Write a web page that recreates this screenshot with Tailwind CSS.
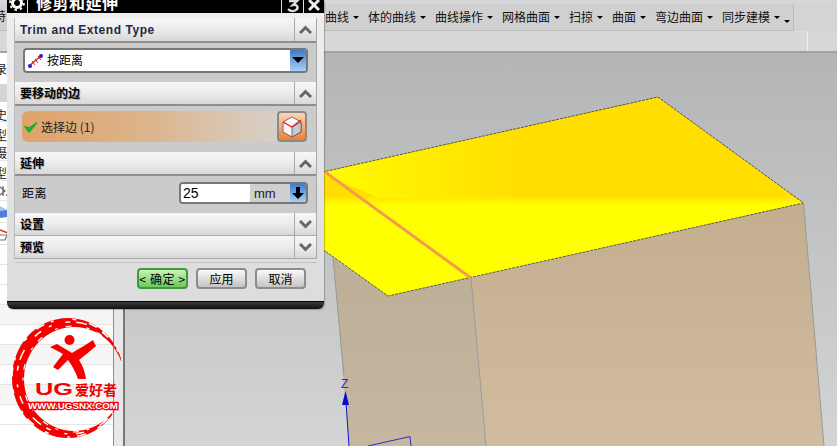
<!DOCTYPE html>
<html lang="zh">
<head>
<meta charset="utf-8">
<script src="https://cdn.jsdelivr.net/npm/@tailwindcss/browser@4"></script>
</head>
<body class="m-0">
<div class="relative w-[837px] h-[446px] overflow-hidden bg-[#d8d8d8] flex flex-col font-['Liberation_Sans','Noto_Sans_CJK_SC',sans-serif] text-[12px] text-black">

  <!-- top toolbars -->
  <div class="h-[4px] bg-[#d6d6d6] shrink-0"></div>
  <div class="h-[27px] shrink-0 flex bg-[#d4d4d4]">
    <div class="w-[794px] relative flex items-center bg-[#d0d0d0] border-b border-r border-[#bcbcbc] pl-[325px] gap-[9px] whitespace-nowrap font-['Noto_Sans_CJK_SC',sans-serif] text-[#111]">
      <span class="absolute left-[-6px] top-[3px]">特</span>
      <span class="flex items-center gap-[4px]">曲线<i class="w-0 h-0 border-x-[3px] border-t-[3px] border-x-transparent border-t-black"></i></span>
      <span class="flex items-center gap-[4px]">体的曲线<i class="w-0 h-0 border-x-[3px] border-t-[3px] border-x-transparent border-t-black"></i></span>
      <span class="flex items-center gap-[4px]">曲线操作<i class="w-0 h-0 border-x-[3px] border-t-[3px] border-x-transparent border-t-black"></i></span>
      <span class="flex items-center gap-[4px]">网格曲面<i class="w-0 h-0 border-x-[3px] border-t-[3px] border-x-transparent border-t-black"></i></span>
      <span class="flex items-center gap-[4px]">扫掠<i class="w-0 h-0 border-x-[3px] border-t-[3px] border-x-transparent border-t-black"></i></span>
      <span class="flex items-center gap-[4px]">曲面<i class="w-0 h-0 border-x-[3px] border-t-[3px] border-x-transparent border-t-black"></i></span>
      <span class="flex items-center gap-[4px]">弯边曲面<i class="w-0 h-0 border-x-[3px] border-t-[3px] border-x-transparent border-t-black"></i></span>
      <span class="flex items-center gap-[4px]">同步建模<i class="w-0 h-0 border-x-[3px] border-t-[3px] border-x-transparent border-t-black"></i></span>
      <i class="w-0 h-0 mt-[9px] -ml-[5px] border-x-[3px] border-t-[3px] border-x-transparent border-t-black"></i>
    </div>
  </div>
  <div class="h-[22px] shrink-0 flex bg-[#d8d8d8] border-b-2 border-[#a2a2a2]">
    <div class="w-[808px] border-r border-[#f0f0f0]"></div>
  </div>

  <!-- main area -->
  <div class="flex-1 flex min-h-0">
    <!-- left panel -->
    <div class="w-[113px] shrink-0 flex flex-col bg-white font-['Noto_Sans_CJK_SC',sans-serif] text-[#222] overflow-hidden">
      <div class="h-[31px] shrink-0 flex items-center"><span class="-ml-[5px]">录</span></div>
      <div class="h-[18px] shrink-0 bg-[#d4d4d4]"></div>
      <div class="h-[20px] shrink-0 flex items-center pt-[6px] border-b border-[#e4e4e4]"><span class="-ml-[5px]">史</span></div>
      <div class="h-[20px] shrink-0 flex items-center pt-[6px] border-b border-[#e4e4e4]"><span class="-ml-[5px]">型</span></div>
      <div class="h-[19px] shrink-0 flex items-center pt-[4px] border-b border-[#e4e4e4]"><span class="-ml-[5px]">摄</span></div>
      <div class="h-[20px] shrink-0 flex items-center pt-[4px] border-b border-[#e4e4e4]"><span class="-ml-[5px]">型</span></div>
      <div class="h-[20px] shrink-0 flex items-center border-b border-[#e4e4e4]">
        <svg class="w-[8px] h-[14px]" viewBox="0 0 8 14"><path d="M0,3 L5,7 L0,11 M3,2 V12" fill="none" stroke="#666" stroke-width="1.300"/><circle cx="7" cy="11" r="1" fill="#d03030"/></svg>
      </div>
      <div class="h-[22px] shrink-0 flex items-center border-b border-[#e4e4e4]">
        <svg class="w-[8px] h-[14px]" viewBox="0 0 8 14"><path d="M0,3 L7,5 V12 L0,13 Z" fill="#4f80e0"/><path d="M0,1 L7,5 L0,6 Z" fill="#a8c4f4"/></svg>
      </div>
      <div class="h-[22px] shrink-0 flex items-center border-b border-[#e4e4e4]">
        <svg class="w-[8px] h-[14px]" viewBox="0 0 8 14"><path d="M0,3 L8,6" stroke="#e03020" stroke-width="1.500"/><path d="M0,8 H7 L5,13 H0" fill="none" stroke="#777" stroke-width="1.200"/></svg>
      </div>
      <div class="h-[20px] shrink-0 border-b border-[#e4e4e4]"></div>
      <div class="h-[20px] shrink-0 border-b border-[#e4e4e4]"></div>
      <div class="h-[20px] shrink-0 border-b border-[#e4e4e4]"></div>
      <div class="h-[20px] shrink-0 bg-[#f5f5f5] border-b border-[#e4e4e4]"></div>
      <div class="h-[20px] shrink-0 bg-white border-b border-[#e4e4e4]"></div>
      <div class="h-[20px] shrink-0 bg-[#f5f5f5] border-b border-[#e4e4e4]"></div>
      <div class="h-[20px] shrink-0 bg-white border-b border-[#e4e4e4]"></div>
      <div class="h-[20px] shrink-0 bg-[#f5f5f5] border-b border-[#e4e4e4]"></div>
      <div class="h-[20px] shrink-0 bg-white border-b border-[#e4e4e4]"></div>
    </div>
    <!-- splitter -->
    <div class="w-[12px] shrink-0 bg-[#e8e8e8] border-l border-r-2 border-l-[#8c8c8c] border-r-[#787878]"></div>
    <!-- viewport -->
    <div class="flex-1 relative bg-gradient-to-b from-[#b4b5b7] to-[#d3d4d6]">
      <svg class="absolute inset-0 w-full h-full" viewBox="125 53 712 393" xmlns="http://www.w3.org/2000/svg">
        <defs>
          <linearGradient id="yv" gradientUnits="userSpaceOnUse" x1="0" y1="195" x2="0" y2="205">
            <stop offset="0" stop-color="#ffde00"/><stop offset="1" stop-color="#ffff00"/>
          </linearGradient>
          <linearGradient id="yh" gradientUnits="userSpaceOnUse" x1="340" y1="0" x2="520" y2="0">
            <stop offset="0" stop-color="#ffff00"/><stop offset="1" stop-color="#ffff00" stop-opacity="0"/>
          </linearGradient>
          <linearGradient id="lf" gradientUnits="userSpaceOnUse" x1="0" y1="280" x2="0" y2="446">
            <stop offset="0" stop-color="#bdaf98"/><stop offset="1" stop-color="#c6b79f"/>
          </linearGradient>
          <linearGradient id="rf" gradientUnits="userSpaceOnUse" x1="0" y1="205" x2="0" y2="446">
            <stop offset="0" stop-color="#c4ae90"/><stop offset="1" stop-color="#d2bc9f"/>
          </linearGradient>
        </defs>
        <polygon points="333,258 388,296 471,278 486,446 349,446" fill="url(#lf)"/>
        <polygon points="471,278 803.500,203 824,446 486,446" fill="url(#rf)"/>
        <polygon points="318,173 658,97 803.500,203 388,296 318,246" fill="url(#yv)"/>
        <polygon points="318,173 658,97 690,121 700,198 380,198" fill="url(#yh)" opacity="0.85"/>
        <path d="M318,173 L658,97 L803.500,203 L388,296 L318,246" fill="none" stroke="#555" stroke-width="1" stroke-dasharray="3 1"/>
        <path d="M333,258 L344,376 M471,278 L486,446 M803.500,203 L824,446" fill="none" stroke="#9a9a9a" stroke-width="1"/>
        <line x1="325" y1="172" x2="471" y2="278" stroke="#f59c4c" stroke-width="3"/>
        <!-- csys -->
        <line x1="346" y1="402" x2="349" y2="446" stroke="#1414d8" stroke-width="1"/>
        <polygon points="345.500,391 342,405 349,405" fill="#0a0ad0"/>
        <text x="341" y="388" font-size="12" fill="#2a2ae0" font-family="Liberation Sans, sans-serif">Z</text>
        <path d="M368,446 L410,436.500 L411,446" fill="none" stroke="#2a2ad8" stroke-width="1"/>
      </svg>
    </div>
  </div>

  <!-- logo -->
  <svg class="absolute left-[8px] top-[314px] w-[124px] h-[128px]" viewBox="8 314 124 128" xmlns="http://www.w3.org/2000/svg">
    <defs>
      <mask id="rag" maskUnits="userSpaceOnUse" x="8" y="314" width="124" height="128">
        <rect x="8" y="314" width="124" height="128" fill="#fff"/>
        <rect x="114" y="361" width="18" height="24" fill="#000"/>
        <ellipse cx="71" cy="378" rx="54" ry="56" fill="none" stroke="#000" stroke-width="1.500" stroke-dasharray="8 9 3 14 5 6 11 17"/>
        <ellipse cx="68" cy="378" rx="56" ry="59" fill="none" stroke="#000" stroke-width="1.500" stroke-dasharray="4 13 9 7 3 19"/>
        <ellipse cx="73" cy="379" rx="50" ry="53" fill="none" stroke="#000" stroke-width="1.200" stroke-dasharray="3 8 6 15"/>
      </mask>
    </defs>
    <path mask="url(#rag)" fill="#f40000" fill-rule="evenodd" d="M12,378 A56,60 0 1 1 124,378 A56,60 0 1 1 12,378 Z M24,379 A50,52 0 1 0 124,379 A50,52 0 1 0 24,379 Z"/>
    <g fill="#f40000">
      <circle cx="69.500" cy="340" r="5"/>
      <path d="M50,347 L57,344 L72,353 C78,349 86,345 93,340 L96,346 C90,351 84,356 79,360 C83,366 85,372 86,379 L78,379 C75,371 72,365 68,360 L58,370 L53,367 L63,354 Z"/>
    </g>
    <text x="35" y="395" font-size="16" font-weight="700" fill="#f40000" textLength="38" lengthAdjust="spacingAndGlyphs" font-family="Liberation Sans, sans-serif">UG</text>
    <text x="75" y="395" font-size="14" font-weight="700" fill="#f40000" font-family="Noto Sans CJK SC, sans-serif">爱好者</text>
    <text x="28" y="408.500" font-size="8.500" font-weight="700" fill="#fff" stroke="#f40000" stroke-width="2.500" class="[paint-order:stroke]" textLength="90" lengthAdjust="spacingAndGlyphs" font-family="Liberation Sans, sans-serif">WWW.UGSNX.COM</text>
  </svg>

  <!-- dialog -->
  <div class="absolute left-[7px] top-0 w-[317px] h-[309px] flex flex-col rounded-b-[6px] overflow-hidden shadow-[1px_1px_1px_rgba(0,0,0,0.25)]">
    <!-- title bar -->
    <div class="h-[13px] shrink-0 bg-black flex items-start overflow-hidden text-white">
      <div class="w-[21px] h-[13px] border-r border-[#ddd] flex justify-center">
        <svg class="w-[16px] h-[16px] -mt-[5px] shrink-0" viewBox="0 0 16 16"><circle cx="8" cy="8" r="4.500" fill="none" stroke="#fff" stroke-width="3"/><circle cx="8" cy="8" r="7" fill="none" stroke="#fff" stroke-width="1.800" stroke-dasharray="2.500 3"/></svg>
      </div>
      <div class="flex-1 pl-[8px] -mt-[7px] text-[16px] font-bold leading-[18px] tracking-[0.5px] font-['Noto_Sans_CJK_SC',sans-serif]">修剪和延伸</div>
      <div class="w-[22px] h-[13px] border-l border-[#ddd] flex justify-center">
        <svg class="w-[14px] h-[13px]" viewBox="0 0 14 13"><path d="M3,1 H11 L7,5 C12,4 13,9 9,10.500 C7,11.500 4,11 2,9" fill="none" stroke="#ddd" stroke-width="2.400"/></svg>
      </div>
      <div class="w-[21px] h-[13px] border-l border-[#ddd] flex justify-center">
        <svg class="w-[12px] h-[13px]" viewBox="0 0 12 13"><path d="M1,0 L11,10 M11,0 L1,10" fill="none" stroke="#eee" stroke-width="3"/></svg>
      </div>
    </div>
    <!-- body -->
    <div class="flex-1 min-h-0 bg-gradient-to-b from-[#eeeeee] to-[#dcdcdc] px-[7px] pt-[5px] flex flex-col">
      <div class="flex flex-col border-l border-r border-b border-[#a8a8a8] border-l-[#bbb]">
        <!-- section 1 -->
        <div class="h-[23px] flex bg-gradient-to-b from-[#f6f6f6] via-[#ececec] to-[#d8d8d8]">
          <div class="flex-1 pl-[5px] flex items-center font-bold text-[12px] tracking-[0.55px] text-[#1e2a44]">Trim and Extend Type</div>
          <div class="w-[22px] border-l border-[#aaa] flex items-center justify-center">
            <svg class="w-[13px] h-[9px]" viewBox="0 0 13 9"><path d="M1,8 L6.500,2.500 L12,8" fill="none" stroke="#666" stroke-width="3"/></svg>
          </div>
        </div>
        <div class="h-[41px] bg-[#cbcbcb] border-t-2 border-[#8e8e8e] flex items-center px-[8px] pb-[5px]">
          <div class="w-full h-[25px] bg-white border-2 border-[#777] rounded-[4px] flex items-center overflow-hidden">
            <svg class="w-[17px] h-[17px] ml-[2px] shrink-0" viewBox="0 0 17 17"><path d="M2,14 L15,3" stroke="#e01818" stroke-width="1.300"/><path d="M5,9 L8,13 M8,7 L11,11 M11,4 L14,8" stroke="#e01818" stroke-width="1"/><circle cx="3" cy="14" r="2" fill="#2020d0"/><circle cx="14" cy="4" r="2" fill="#2020d0"/></svg>
            <span class="ml-[3px] flex-1 font-['Noto_Sans_CJK_SC',sans-serif] text-[12px] leading-none">按距离</span>
            <div class="w-[16px] h-full bg-gradient-to-b from-[#3f79c8] to-[#a8d0f4] flex items-center justify-center">
              <i class="w-0 h-0 border-x-[6px] border-t-[6px] border-x-transparent border-t-black"></i>
            </div>
          </div>
        </div>
        <!-- section 2 -->
        <div class="h-[22px] flex bg-gradient-to-b from-[#f6f6f6] via-[#ececec] to-[#d8d8d8]">
          <div class="flex-1 pl-[5px] flex items-center font-bold text-[12px] font-['Noto_Sans_CJK_SC',sans-serif] [text-shadow:1px_1px_0_#b0b0b0]">要移动的边</div>
          <div class="w-[22px] border-l border-[#aaa] flex items-center justify-center">
            <svg class="w-[13px] h-[9px]" viewBox="0 0 13 9"><path d="M1,8 L6.500,2.500 L12,8" fill="none" stroke="#666" stroke-width="3"/></svg>
          </div>
        </div>
        <div class="h-[48px] bg-[#cbcbcb] border-t-2 border-[#8e8e8e] flex items-center pl-[7px] pr-[9px] pb-[5px]">
          <div class="flex-1 h-[31px] rounded-l-[6px] bg-gradient-to-r from-[#dfa367] via-[#dcb48c] to-[#d6d0c8] flex items-center pl-[2px]">
            <svg class="w-[14px] h-[14px]" viewBox="0 0 14 14"><path d="M1.500,7 L5,12 L13,2.500 L5.500,8 Z" fill="#10c030" stroke="#10b030" stroke-width="1.500"/></svg>
            <span class="ml-[3px] font-['Noto_Sans_CJK_SC',sans-serif] text-[12px] text-[#222]">选择边 (1)</span>
          </div>
          <div class="w-[30px] h-[31px] rounded-[4px] border-2 border-[#8a8a8a] bg-gradient-to-b from-[#f9d4b4] to-[#f27c24] flex items-center justify-center">
            <svg class="w-[22px] h-[24px]" viewBox="0 0 22 24"><path d="M11,2 L20,7 V17 L11,22 L2,17 V7 Z" fill="#f6f6fa" stroke="#555" stroke-width="0.800"/><path d="M11,12 L20,7 V17 L11,22 Z" fill="#c8c8d4" stroke="#555" stroke-width="0.800"/><path d="M2,7 L11,12 L20,5" fill="none" stroke="#e02010" stroke-width="1.300"/></svg>
          </div>
        </div>
        <!-- section 3 -->
        <div class="h-[22px] flex bg-gradient-to-b from-[#f6f6f6] via-[#ececec] to-[#d8d8d8]">
          <div class="flex-1 pl-[5px] flex items-center font-bold text-[12px] font-['Noto_Sans_CJK_SC',sans-serif] [text-shadow:1px_1px_0_#b0b0b0]">延伸</div>
          <div class="w-[22px] border-l border-[#aaa] flex items-center justify-center">
            <svg class="w-[13px] h-[9px]" viewBox="0 0 13 9"><path d="M1,8 L6.500,2.500 L12,8" fill="none" stroke="#666" stroke-width="3"/></svg>
          </div>
        </div>
        <div class="h-[39px] bg-[#cbcbcb] border-t-2 border-[#8e8e8e] flex items-center justify-between pl-[7px] pr-[8px] pb-[3px] font-['Noto_Sans_CJK_SC',sans-serif]">
          <span class="text-[12px] tracking-[0.5px]">距离</span>
          <div class="w-[129px] h-[22px] border-2 border-[#777] rounded-[4px] flex items-center overflow-hidden bg-[#cfcfcf]">
            <span class="w-[69px] h-full bg-white pl-[2px] text-[14px] leading-[18px] font-['Liberation_Sans',sans-serif]">25</span>
            <span class="flex-1 pl-[4px] text-[13px] leading-none text-[#222] font-['Liberation_Sans',sans-serif]">mm</span>
            <div class="w-[16px] h-full bg-gradient-to-b from-[#3f79c8] to-[#a8d0f4] flex items-center justify-center">
              <svg class="w-[12px] h-[12px]" viewBox="0 0 12 12"><path d="M4,0 H8 V6 H12 L6,12 L0,6 H4 Z" fill="#000"/></svg>
            </div>
          </div>
        </div>
        <!-- section 4 -->
        <div class="h-[23px] flex bg-gradient-to-b from-[#f6f6f6] via-[#ececec] to-[#d8d8d8] border-b border-[#a8a8a8]">
          <div class="flex-1 pl-[5px] flex items-center font-bold text-[12px] font-['Noto_Sans_CJK_SC',sans-serif] [text-shadow:1px_1px_0_#b0b0b0]">设置</div>
          <div class="w-[22px] border-l border-[#aaa] flex items-center justify-center">
            <svg class="w-[13px] h-[9px]" viewBox="0 0 13 9"><path d="M1,1 L6.500,6.500 L12,1" fill="none" stroke="#666" stroke-width="3"/></svg>
          </div>
        </div>
        <!-- section 5 -->
        <div class="h-[22px] flex bg-gradient-to-b from-[#f6f6f6] via-[#ececec] to-[#d8d8d8]">
          <div class="flex-1 pl-[5px] flex items-center font-bold text-[12px] font-['Noto_Sans_CJK_SC',sans-serif] [text-shadow:1px_1px_0_#b0b0b0]">预览</div>
          <div class="w-[22px] border-l border-[#aaa] flex items-center justify-center">
            <svg class="w-[13px] h-[9px]" viewBox="0 0 13 9"><path d="M1,1 L6.500,6.500 L12,1" fill="none" stroke="#666" stroke-width="3"/></svg>
          </div>
        </div>
      </div>
      <div class="h-[1px] mt-[3px] bg-[#c4c4c4]"></div>
      <!-- buttons -->
      <div class="flex justify-end gap-[8px] pt-[5px] pr-[11px] font-['Noto_Sans_CJK_SC',sans-serif] text-[12px]">
        <div class="w-[51px] h-[21px] rounded-[4px] border-2 border-[#3f9a3f] bg-gradient-to-b from-[#c8f4b4] to-[#6cc85c] flex items-center justify-center whitespace-nowrap tracking-[0.6px]">&lt; 确定 &gt;</div>
        <div class="w-[51px] h-[21px] rounded-[4px] border-2 border-[#8c8c8c] bg-gradient-to-b from-[#fafafa] to-[#c4c4c4] flex items-center justify-center">应用</div>
        <div class="w-[51px] h-[21px] rounded-[4px] border-2 border-[#8c8c8c] bg-gradient-to-b from-[#fafafa] to-[#c4c4c4] flex items-center justify-center">取消</div>
      </div>
    </div>
    <!-- bottom bar -->
    <div class="h-[8px] shrink-0 bg-gradient-to-b from-[#3a3a3a] to-[#111] border-t border-black"></div>
  </div>
</div>
</body>
</html>
